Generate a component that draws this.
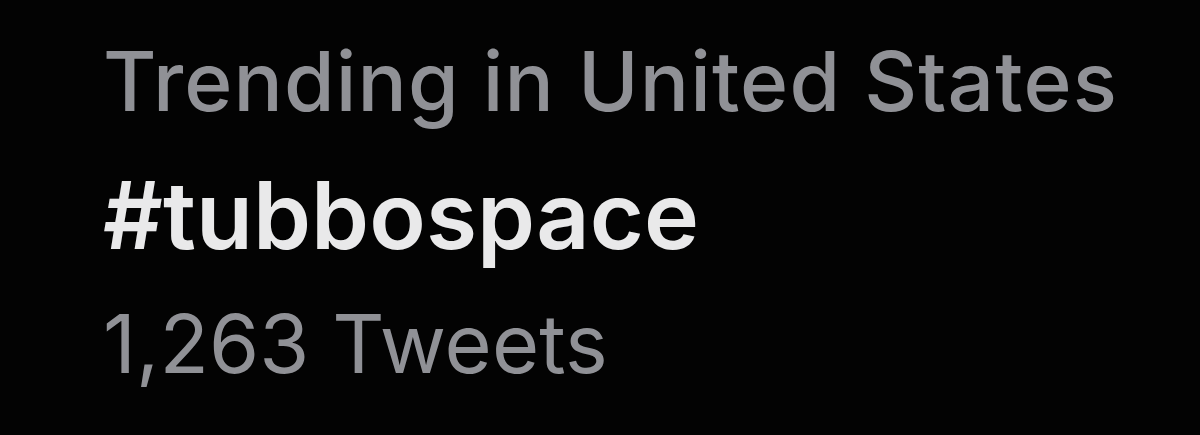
function TrendItem({
  context,
  topic,
  count,
}: {
  context: string
  topic: string
  count: string
}): React.JSX.Element {
  return (
    <div className="pl-[103px] pt-[32px] font-['Inter','Noto_Sans',sans-serif]">
      <p className="text-[82px] leading-[100px] font-medium text-[#909196] tracking-[1.1px]">
        {context}
      </p>
      <p className="mt-[28px] text-[93px] leading-[110px] font-semibold text-[#e9e9ea] tracking-[0.1px]">
        {topic}
      </p>
      <p className="mt-[24px] text-[81px] leading-[100px] font-normal text-[#909196] tracking-[0.1px]">
        {count} Tweets
      </p>
    </div>
  )
}

export default function App(): React.JSX.Element {
  return (
    <div className="w-[1200px] h-[435px] bg-[#030303] overflow-hidden">
      <TrendItem
        context="Trending in United States"
        topic="#tubbospace"
        count="1,263"
      />
    </div>
  )
}
